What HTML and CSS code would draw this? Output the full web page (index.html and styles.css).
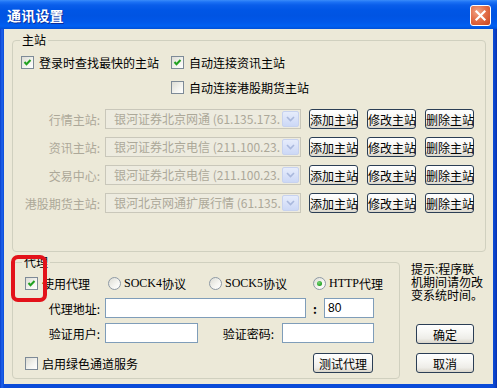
FILE: index.html
```html
<!DOCTYPE html>
<html>
<head>
<meta charset="utf-8">
<link rel="stylesheet" href="styles.css">
</head>
<body>
<div class="window">
  <div class="titlebar">
    <span class="title">通讯设置</span>
    <span class="close"><svg width="13" height="13" viewBox="0 0 13 13"><path d="M2.5 2.5 L10.5 10.5 M10.5 2.5 L2.5 10.5" stroke="#fff" stroke-width="2.2" stroke-linecap="square"/></svg></span>
  </div>
  <div class="client">
    <div class="group g-main">
      <div class="legend">主站</div>
      <div class="opts">
        <div class="chk"><span class="cb on"><svg width="11" height="11" viewBox="0 0 11 11"><path d="M2.5 5 L4.5 7.2 L8.5 3" fill="none" stroke="#21A121" stroke-width="2"/></svg></span>登录时查找最快的主站</div>
        <div class="chk"><span class="cb on"><svg width="11" height="11" viewBox="0 0 11 11"><path d="M2.5 5 L4.5 7.2 L8.5 3" fill="none" stroke="#21A121" stroke-width="2"/></svg></span>自动连接资讯主站</div>
        <div class="chk c2"><span class="cb"></span>自动连接港股期货主站</div>
      </div>
      <div class="servers">
        <div class="srow">
          <span class="slabel">行情主站:</span>
          <div class="combo"><span class="ctext">银河证券北京网通 (61.135.173.</span><span class="carrow"><svg width="9" height="6" viewBox="0 0 9 6"><path d="M1 1 L4.5 4.5 L8 1" fill="none" stroke="#A9B8DC" stroke-width="1.6"/></svg></span></div>
          <button class="btn sbtn">添加主站</button><button class="btn sbtn">修改主站</button><button class="btn sbtn">删除主站</button>
        </div>
        <div class="srow">
          <span class="slabel">资讯主站:</span>
          <div class="combo"><span class="ctext">银河证券北京电信 (211.100.23.</span><span class="carrow"><svg width="9" height="6" viewBox="0 0 9 6"><path d="M1 1 L4.5 4.5 L8 1" fill="none" stroke="#A9B8DC" stroke-width="1.6"/></svg></span></div>
          <button class="btn sbtn">添加主站</button><button class="btn sbtn">修改主站</button><button class="btn sbtn">删除主站</button>
        </div>
        <div class="srow">
          <span class="slabel">交易中心:</span>
          <div class="combo"><span class="ctext">银河证券北京电信 (211.100.23.</span><span class="carrow"><svg width="9" height="6" viewBox="0 0 9 6"><path d="M1 1 L4.5 4.5 L8 1" fill="none" stroke="#A9B8DC" stroke-width="1.6"/></svg></span></div>
          <button class="btn sbtn">添加主站</button><button class="btn sbtn">修改主站</button><button class="btn sbtn">删除主站</button>
        </div>
        <div class="srow">
          <span class="slabel">港股期货主站:</span>
          <div class="combo"><span class="ctext">银河北京网通扩展行情 (61.135.</span><span class="carrow"><svg width="9" height="6" viewBox="0 0 9 6"><path d="M1 1 L4.5 4.5 L8 1" fill="none" stroke="#A9B8DC" stroke-width="1.6"/></svg></span></div>
          <button class="btn sbtn">添加主站</button><button class="btn sbtn">修改主站</button><button class="btn sbtn">删除主站</button>
        </div>
      </div>
    </div>
    <div class="bottom">
      <div class="group g-proxy">
        <div class="legend lg2">代理</div>
        <div class="prow1">
          <div class="chk o1"><span class="cb on"><svg width="11" height="11" viewBox="0 0 11 11"><path d="M2.5 5 L4.5 7.2 L8.5 3" fill="none" stroke="#21A121" stroke-width="2"/></svg></span>使用代理</div>
          <div class="rad o2"><span class="rb"></span><span class="lat">SOCK4</span>协议</div>
          <div class="rad o3"><span class="rb"></span><span class="lat">SOCK5</span>协议</div>
          <div class="rad"><span class="rb on"></span><span class="lat">HTTP</span>代理</div>
        </div>
        <div class="prow2">
          <span class="plabel">代理地址:</span>
          <span class="inp addr"></span>
          <span class="colon">:</span>
          <span class="inp port">80</span>
        </div>
        <div class="prow3">
          <span class="plabel">验证用户:</span>
          <span class="inp user"></span>
          <span class="plabel2">验证密码:</span>
          <span class="inp pass"></span>
        </div>
        <div class="prow4">
          <div class="chk o4"><span class="cb"></span>启用绿色通道服务</div>
          <button class="btn tbtn">测试代理</button>
        </div>
      </div>
      <div class="side">
        <div class="tip">提示:程序联<br>机期间请勿改<br>变系统时间。</div>
        <button class="btn obtn ok">确定</button>
        <button class="btn obtn cancel">取消</button>
      </div>
    </div>
  </div>
  <div class="annot"></div>
</div>
</body>
</html>
```

FILE: styles.css
```css
html, body {
  margin: 0;
  padding: 0;
  background: #ECE9D8;
}
body {
  font-family: "Noto Sans CJK SC", "Liberation Sans", sans-serif;
  font-size: 12px;
  color: #000;
}
.window {
  position: relative;
  width: 497px;
  height: 388px;
  background: linear-gradient(90deg, #0A3FCB 0, #1E63EC 2px, #0A4BD8 4px, #0A4BD8 493px, #0B42C8 495px, #0630B0 497px);
  display: flex;
  flex-direction: column;
  overflow: hidden;
}
.titlebar {
  height: 29px;
  flex: none;
  box-sizing: border-box;
  padding: 0 6px 0 7px;
  display: flex;
  align-items: center;
  justify-content: space-between;
  background: linear-gradient(180deg, #3A8CFA 0, #1C72F5 2px, #0A5EEA 5px, #0056E6 10px, #0054E3 16px, #0058EA 22px, #0060F2 26px, #0050D8 29px);
}
.title {
  color: #fff;
  font-weight: bold;
  font-size: 14px;
  letter-spacing: 0.2px;
  text-shadow: 1px 1px 0 #0A2C9A;
  margin-top: 1px;
}
.close {
  width: 21px;
  height: 21px;
  box-sizing: border-box;
  border: 1px solid #fff;
  border-radius: 3px;
  background: radial-gradient(circle at 35% 30%, #F2A486 0, #E3704A 45%, #C9441D 100%);
  display: flex;
  align-items: center;
  justify-content: center;
  margin-top: 1px;
}
.client {
  flex: 1;
  margin: 0 4px 4px 4px;
  background: #ECE9D8;
  padding: 11px 0 0 8px;
  box-sizing: border-box;
}
.group {
  border: 1px solid #D0D0BF;
  border-radius: 4px;
  box-sizing: border-box;
}
.legend {
  margin: -8px 0 0 7px;
  padding: 0 2px;
  height: 14px;
  line-height: 14px;
  background: #ECE9D8;
  width: fit-content;
}
.g-main {
  width: 474px;
  height: 212px;
  flex: none;
}
.opts {
  display: grid;
  grid-template-columns: 150px auto;
  grid-auto-rows: 13px;
  row-gap: 12px;
  margin: 9px 0 0 8px;
}
.c2 { grid-column: 2; }
.chk, .rad {
  display: flex;
  align-items: center;
  height: 13px;
  line-height: 13px;
  white-space: nowrap;
}
.cb {
  width: 13px;
  height: 13px;
  box-sizing: border-box;
  border: 1px solid #7D8A97;
  background: linear-gradient(135deg, #DCDCD4 0, #F4F4F0 60%, #FFFFFF 100%);
  margin-right: 5px;
  flex: none;
  display: flex;
  align-items: center;
  justify-content: center;
}
.rb {
  width: 13px;
  height: 13px;
  box-sizing: border-box;
  border: 1px solid #8E99A5;
  border-radius: 50%;
  background: linear-gradient(135deg, #DCDCD4 0, #F6F6F2 60%, #FFFFFF 100%);
  margin-right: 3px;
  flex: none;
  display: flex;
  align-items: center;
  justify-content: center;
}
.rb.on::after {
  content: "";
  width: 5px;
  height: 5px;
  border-radius: 50%;
  background: radial-gradient(circle at 40% 35%, #7BD47B 0, #21A121 70%);
}
.lat {
  font-family: "Liberation Serif", serif;
  font-size: 12px;
}
.servers {
  margin-top: 15px;
  display: flex;
  flex-direction: column;
  gap: 8px;
}
.srow {
  display: flex;
  align-items: center;
  height: 20px;
}
.slabel {
  width: 87px;
  margin-right: 5px;
  text-align: right;
  color: #ACA899;
  white-space: nowrap;
}
.combo {
  width: 196px;
  height: 20px;
  box-sizing: border-box;
  border: 1px solid #C9C7BA;
  background: #EDEBDF;
  display: flex;
  align-items: center;
  padding: 1px;
}
.ctext {
  flex: 1;
  padding-left: 7px;
  overflow: hidden;
  white-space: nowrap;
  color: #ACA899;
  line-height: 16px;
}
.carrow {
  width: 17px;
  height: 16px;
  box-sizing: border-box;
  border: 1px solid #C7D2EF;
  border-radius: 2px;
  background: linear-gradient(180deg, #E6ECFB 0, #CCD8F6 100%);
  display: flex;
  align-items: center;
  justify-content: center;
  flex: none;
}
.btn {
  font-family: "Noto Sans CJK SC", sans-serif;
  font-size: 12px;
  color: #000;
  height: 20px;
  padding: 0;
  box-sizing: border-box;
  border: 1px solid #2B3E55;
  border-radius: 3px;
  background: linear-gradient(180deg, #FFFFFF 0, #F7F7F4 40%, #EEEDE8 75%, #D9D5CA 100%);
  line-height: 17px;
  white-space: nowrap;
}
.sbtn {
  width: 49px;
  margin-left: 9px;
}
.sbtn:first-of-type { margin-left: 8px; }
.bottom {
  display: flex;
  margin-top: 10px;
  height: 117px;
}
.g-proxy {
  width: 388px;
  height: 117px;
  flex: none;
}
.lg2 { margin-left: 9px; }
.prow1 {
  display: flex;
  align-items: center;
  margin: 8px 0 0 12px;
  height: 13px;
}
.o1 { width: 83px; }
.o1 .cb { margin-right: 4px; }
.o2 { width: 101px; }
.o3 { width: 104px; }
.prow2, .prow3 {
  display: flex;
  align-items: center;
  height: 20px;
}
.prow2 { margin-top: 8px; }
.prow3 { margin-top: 5px; }
.plabel {
  width: 92px;
  box-sizing: border-box;
  padding-right: 5px;
  text-align: right;
  white-space: nowrap;
}
.plabel2 {
  width: 84px;
  box-sizing: border-box;
  padding-right: 8px;
  text-align: right;
  white-space: nowrap;
}
.inp {
  height: 20px;
  box-sizing: border-box;
  border: 1px solid #7F9DB9;
  background: #fff;
  padding: 0 3px;
  line-height: 18px;
  font-family: "Liberation Sans", sans-serif;
}
.addr { width: 201px; }
.colon {
  width: 18px;
  text-align: center;
  font-weight: bold;
}
.port { width: 50px; }
.user { width: 93px; }
.pass { width: 92px; }
.prow4 {
  display: flex;
  align-items: center;
  height: 20px;
  margin-top: 10px;
}
.o4 {
  width: 288px;
  margin-left: 12px;
}
.o4 .cb { margin-right: 4px; }
.tbtn { width: 60px; }
.side {
  margin-left: 11px;
  padding-top: 2px;
  display: flex;
  flex-direction: column;
  align-items: flex-start;
}
.tip {
  font-family: "Liberation Sans", "Noto Sans CJK SC", sans-serif;
  line-height: 13px;
  white-space: nowrap;
}
.obtn {
  width: 58px;
  margin-left: 5px;
}
.ok { margin-top: 21px; }
.cancel { margin-top: 9px; }
.annot {
  position: absolute;
  left: 11px;
  top: 255px;
  width: 36px;
  height: 47px;
  box-sizing: border-box;
  border: 4px solid #E3121A;
  border-radius: 7px;
}
```
